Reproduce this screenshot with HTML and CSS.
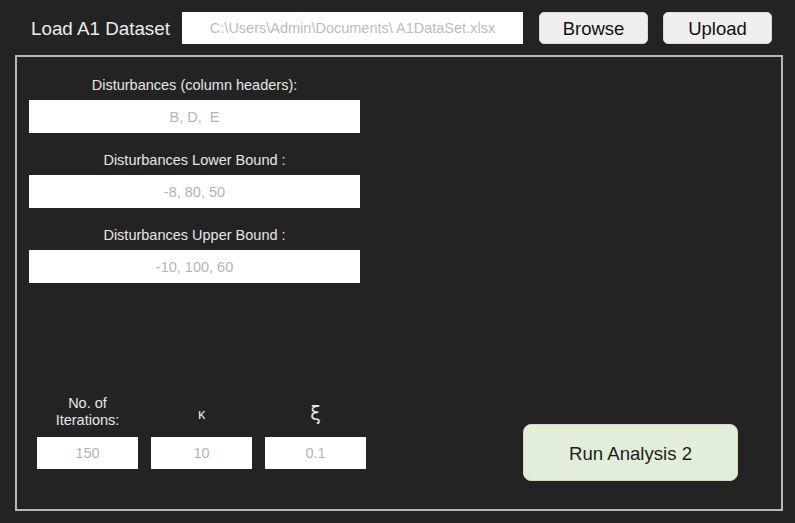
FILE: index.html
```html
<!DOCTYPE html>
<html lang="en">
<head>
<meta charset="utf-8">
<title>Load A1 Dataset</title>
<link rel="stylesheet" href="styles.css">
</head>
<body>
<div class="app">
  <div class="topbar">
    <span class="title">Load A1 Dataset</span>
    <div class="path-box">C:\Users\Admin\Documents\ A1DataSet.xlsx</div>
    <button class="btn">Browse</button>
    <button class="btn">Upload</button>
  </div>
  <div class="panel">
    <div class="fields">
      <div class="field">
        <div class="label">Disturbances (column headers):</div>
        <div class="input">B, D,&nbsp; E</div>
      </div>
      <div class="field">
        <div class="label">Disturbances Lower Bound :</div>
        <div class="input">-8, 80, 50</div>
      </div>
      <div class="field">
        <div class="label">Disturbances Upper Bound :</div>
        <div class="input">-10, 100, 60</div>
      </div>
    </div>
    <div class="bottom">
      <div class="params">
        <div class="param">
          <div class="plabel">No. of<br>Iterations:</div>
          <div class="pinput">150</div>
        </div>
        <div class="param">
          <div class="plabel sym">κ</div>
          <div class="pinput">10</div>
        </div>
        <div class="param">
          <div class="plabel sym xi">ξ</div>
          <div class="pinput">0.1</div>
        </div>
      </div>
      <button class="run">Run Analysis 2</button>
    </div>
  </div>
</div>
</body>
</html>
```

FILE: styles.css
```css
html, body {
  margin: 0;
  padding: 0;
  background: #232323;
}
body {
  width: 795px;
  height: 523px;
  overflow: hidden;
  font-family: "Liberation Sans", Arial, sans-serif;
}
.app {
  display: flex;
  flex-direction: column;
}
.topbar {
  display: flex;
  align-items: center;
  height: 55px;
  padding-left: 31px;
  padding-top: 1px;
  box-sizing: border-box;
}
.title {
  color: #ececec;
  font-size: 18.8px;
  width: 151px;
  padding-top: 2px;
}
.path-box {
  width: 341px;
  height: 32px;
  background: #ffffff;
  color: #bcbcbc;
  font-size: 14.5px;
  display: flex;
  align-items: center;
  justify-content: center;
}
.btn {
  width: 109px;
  height: 32px;
  margin-left: 16px;
  background: #efefef;
  border: 1px solid #d8d8d8;
  border-radius: 5px;
  font-family: inherit;
  font-size: 18.5px;
  color: #111;
  padding: 2px 0 0;
}
.btn + .btn {
  margin-left: 15px;
}
.panel {
  margin-left: 15px;
  width: 768px;
  height: 456px;
  box-sizing: border-box;
  border: 2px solid #b8b8b8;
  display: flex;
  flex-direction: column;
  padding: 20px 0 28px 12px;
}
.fields {
  width: 331px;
  display: flex;
  flex-direction: column;
  gap: 19px;
}
.field {
  display: flex;
  flex-direction: column;
  gap: 7px;
}
.label {
  color: #e6e6e6;
  font-size: 14.5px;
  line-height: 16px;
  text-align: center;
}
.input {
  height: 33px;
  background: #ffffff;
  color: #b4b4b4;
  font-size: 14.5px;
  display: flex;
  align-items: center;
  justify-content: center;
  padding-top: 1px;
  box-sizing: border-box;
}
.bottom {
  margin-top: auto;
  display: flex;
  align-items: flex-end;
}
.params {
  margin-left: 8px;
  margin-bottom: 12px;
  display: flex;
  gap: 13px;
}
.param {
  width: 101px;
  display: flex;
  flex-direction: column;
  gap: 8px;
}
.plabel {
  height: 34px;
  display: flex;
  align-items: center;
  justify-content: center;
  text-align: center;
  color: #e6e6e6;
  font-size: 14.5px;
  line-height: 17px;
  box-sizing: border-box;
}
.plabel.sym {
  padding-top: 5px;
}
.plabel.xi {
  font-size: 19px;
  font-family: "DejaVu Sans", sans-serif;
  padding-top: 3px;
}
.pinput {
  height: 32px;
  background: #ffffff;
  color: #b4b4b4;
  font-size: 14.5px;
  display: flex;
  align-items: center;
  justify-content: center;
}
.run {
  margin-left: 157px;
  width: 215px;
  height: 57px;
  background: #e2eed9;
  border: 1px solid #cfdcc5;
  border-radius: 8px;
  font-family: inherit;
  font-size: 18.6px;
  color: #1e1e1e;
  padding: 3px 0 0;
}
```
